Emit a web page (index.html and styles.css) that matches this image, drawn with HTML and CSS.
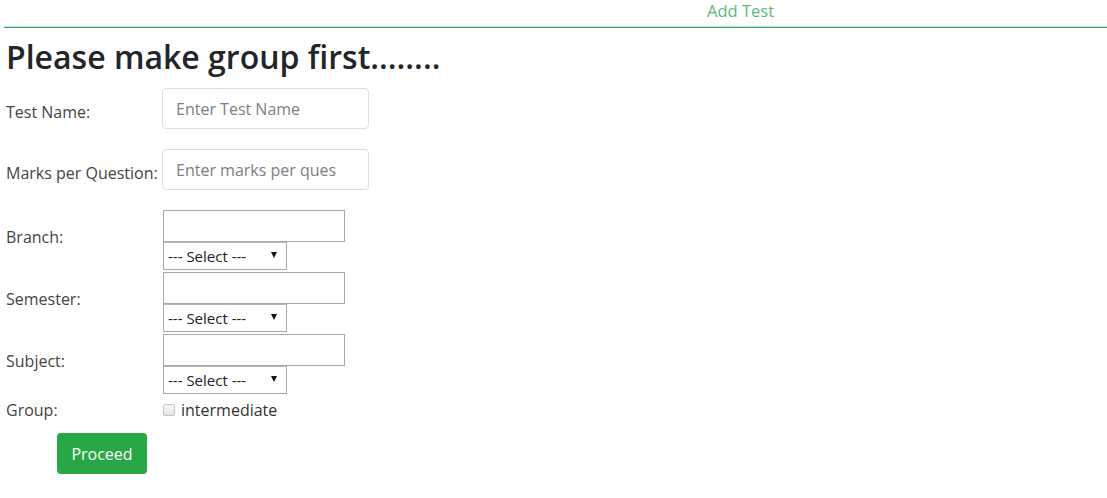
FILE: index.html
```html
<!DOCTYPE html>
<html lang="en">
<head>
<meta charset="utf-8">
<title>Add Test</title>
<link rel="stylesheet" href="styles.css">
</head>
<body>
<div class="topbar"><span class="topbar-title">Add Test</span></div>
<div class="page">
  <h2 class="heading">Please make group first........</h2>
  <form class="form">
    <div class="row row-lg">
      <label class="lbl lbl-low">Test Name:</label>
      <input class="fc" type="text" placeholder="Enter Test Name">
    </div>
    <div class="row row-lg row-second">
      <label class="lbl lbl-low">Marks per Question:</label>
      <input class="fc" type="text" placeholder="Enter marks per ques">
    </div>
    <div class="row row-combo">
      <label class="lbl lbl-high">Branch:</label>
      <div class="combo">
        <input class="plain" type="text">
        <span class="sel-wrap"><select class="sel"><option>--- Select ---</option></select></span>
      </div>
    </div>
    <div class="row row-combo">
      <label class="lbl lbl-high">Semester:</label>
      <div class="combo">
        <input class="plain" type="text">
        <span class="sel-wrap"><select class="sel"><option>--- Select ---</option></select></span>
      </div>
    </div>
    <div class="row row-combo">
      <label class="lbl lbl-high">Subject:</label>
      <div class="combo">
        <input class="plain" type="text">
        <span class="sel-wrap"><select class="sel"><option>--- Select ---</option></select></span>
      </div>
    </div>
    <div class="row row-group">
      <label class="lbl">Group:</label>
      <label class="check"><input class="cb" type="checkbox"><span>intermediate</span></label>
    </div>
    <div class="actions">
      <button class="btn" type="button">Proceed</button>
    </div>
  </form>
</div>
</body>
</html>
```

FILE: styles.css
```css
html, body {
  margin: 0;
  padding: 0;
  background: #ffffff;
}
body {
  font-family: "Open Sans", "Noto Sans", sans-serif;
  color: #3a3a3a;
}
.topbar {
  margin-left: 4px;
  height: 27px;
  border-bottom: 1px solid #36a864;
  box-shadow: inset 0 -1px 0 #c6e8d2;
  display: flex;
  align-items: flex-start;
  padding-left: 703px;
  box-sizing: content-box;
}
.topbar-title {
  color: #5cb87a;
  font-size: 16.5px;
  line-height: 20px;
  padding-top: 1px;
}
.page {
  padding: 0 6px;
}
.heading {
  margin: 6px 0 8px 0;
  font-size: 32px;
  line-height: 46px;
  font-weight: 600;
  color: #222529;
  letter-spacing: 0;
}
.form {
  display: flex;
  flex-direction: column;
}
.row {
  display: grid;
  grid-template-columns: 156px auto;
  align-items: center;
  justify-items: start;
}
.row-lg { margin-bottom: 20px; }
.row-second { margin-bottom: 20px; }
.row-combo { margin-bottom: 2px; }
.lbl {
  font-size: 16px;
  color: #444;
  white-space: nowrap;
}
.lbl-low { padding-top: 6px; }
.lbl-high { padding-bottom: 6px; }
.fc {
  box-sizing: border-box;
  width: 207px;
  height: 41px;
  padding: 0 13px;
  border: 1px solid #dcdfe2;
  border-radius: 4px;
  font-family: "Open Sans", sans-serif;
  font-size: 16px;
  color: #333;
  outline: none;
}
.fc::placeholder { color: #7b8085; }
.combo {
  display: flex;
  flex-direction: column;
  align-items: flex-start;
  padding-left: 1px;
}
.plain {
  box-sizing: border-box;
  width: 182px;
  height: 32px;
  border: 1px solid #a9a9a9;
  border-radius: 0;
  padding: 0 4px;
  margin: 0;
  font-family: "Open Sans", sans-serif;
  font-size: 15px;
  outline: none;
}
.sel-wrap {
  position: relative;
  display: inline-block;
}
.sel {
  -webkit-appearance: none;
  appearance: none;
  box-sizing: border-box;
  width: 124px;
  height: 28px;
  margin: 0;
  border: 1px solid #a9a9a9;
  border-top-color: #b5b5b5;
  border-radius: 0;
  background: #ffffff;
  padding: 0 0 0 4px;
  font-family: "Open Sans", sans-serif;
  font-size: 15px;
  color: #222;
  outline: none;
}
.sel-wrap::after {
  content: "";
  position: absolute;
  right: 10px;
  top: 10px;
  border-left: 3px solid transparent;
  border-right: 3px solid transparent;
  border-top: 6px solid #111;
  pointer-events: none;
}
.row-group {
  margin-top: 3px;
}
.check {
  display: flex;
  align-items: center;
  gap: 6px;
  font-size: 16px;
  color: #333;
  padding-left: 1px;
}
.cb {
  -webkit-appearance: none;
  appearance: none;
  width: 12px;
  height: 12px;
  margin: 0;
  border: 1px solid #c4c4c4;
  border-radius: 2px;
  background: linear-gradient(#fbfbfb, #e4e4e4);
  box-sizing: border-box;
}
.actions {
  padding-left: 51px;
  margin-top: 12px;
}
.btn {
  box-sizing: border-box;
  width: 90px;
  height: 41px;
  border: none;
  border-radius: 4px;
  background: #28a745;
  color: #ffffff;
  font-family: "Open Sans", sans-serif;
  font-size: 16px;
  padding: 0;
  cursor: pointer;
}
```
